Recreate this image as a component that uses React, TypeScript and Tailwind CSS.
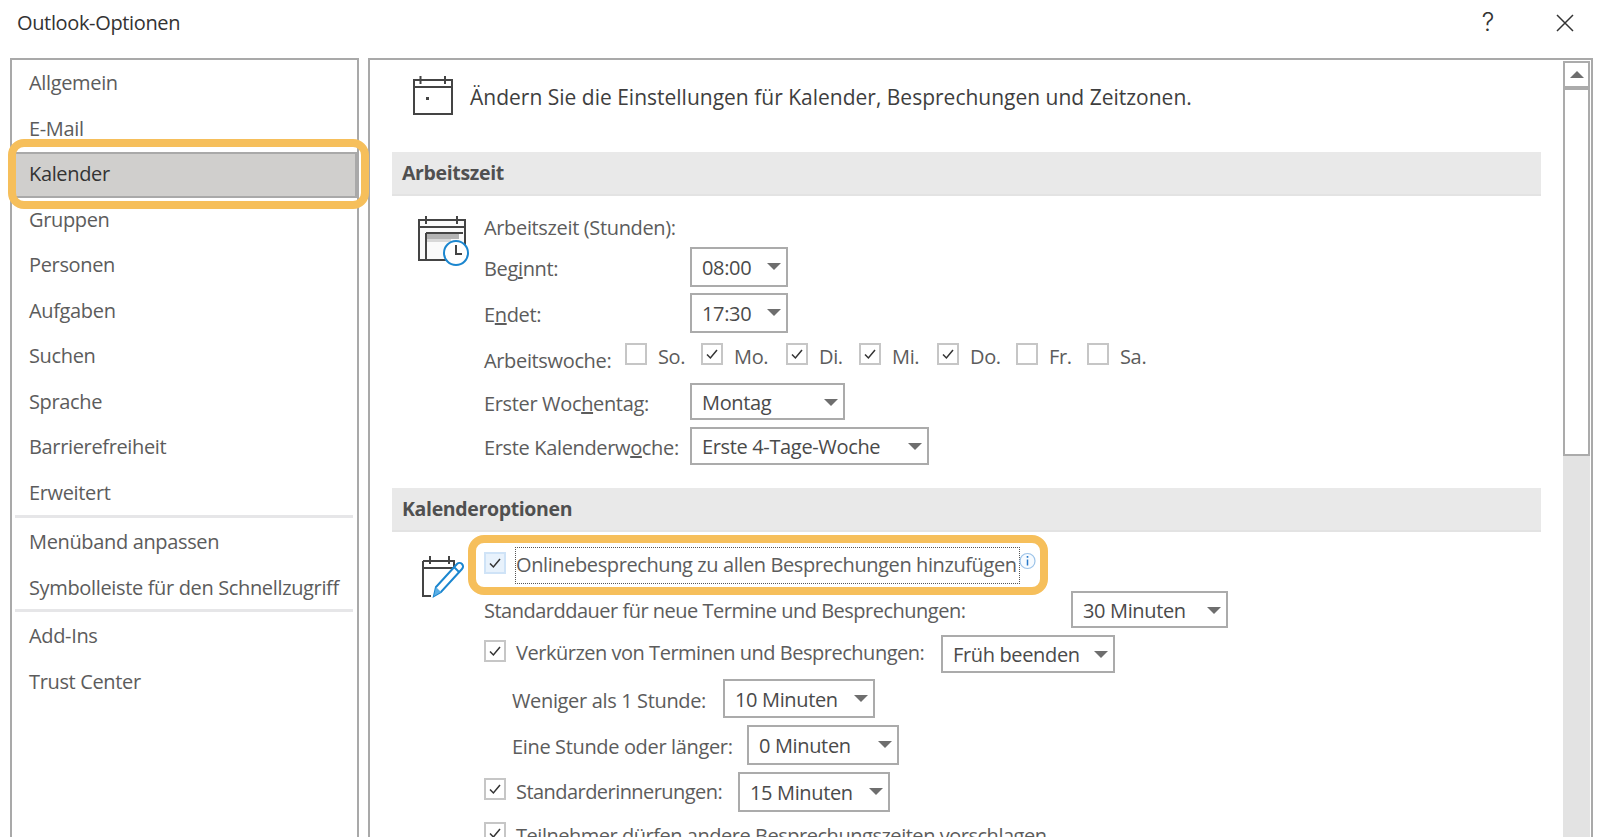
import type { ReactNode } from "react";

const navTop = ["Allgemein", "E-Mail", "Kalender", "Gruppen", "Personen", "Aufgaben", "Suchen", "Sprache", "Barrierefreiheit", "Erweitert"];
const navMid = ["Menüband anpassen", "Symbolleiste für den Schnellzugriff"];
const navEnd = ["Add-Ins", "Trust Center"];

const days = [
  { label: "So.", on: false, w: "w-[76px]" },
  { label: "Mo.", on: true, w: "w-[85px]" },
  { label: "Di.", on: true, w: "w-[73px]" },
  { label: "Mi.", on: true, w: "w-[78px]" },
  { label: "Do.", on: true, w: "w-[79px]" },
  { label: "Fr.", on: false, w: "w-[71px]" },
  { label: "Sa.", on: false, w: "w-[60px]" },
];

function NavItem({ label }: { label: string }) {
  const selected = label === "Kalender";
  return (
    <div
      className={
        selected
          ? "h-[45.5px] flex items-center pl-[14px] pb-[1px] bg-[#d0cfcd] border-y-2 border-r-2 border-[#a9a9a9] text-[#333333]"
          : "h-[45.5px] flex items-center pl-[14px] pb-[1px]"
      }
    >
      {label}
    </div>
  );
}

function Checkbox({ on, focus }: { on: boolean; focus?: boolean }) {
  return (
    <span
      className={
        focus
          ? "w-[22px] h-[22px] -mt-[6px] shrink-0 flex items-center justify-center border-2 border-[#cfe3f7] bg-[#e8f2fc]"
          : "w-[22px] h-[22px] -mt-[6px] shrink-0 flex items-center justify-center border-2 border-[#c6c6c6] bg-white"
      }
    >
      {on && (
        <svg width="14" height="12" viewBox="0 0 14 12" fill="none">
          <path d="M2 6.5 5.4 10 12 2" stroke="#333333" strokeWidth="1.5" />
        </svg>
      )}
    </span>
  );
}

function Select({ value, w, h = "h-[40px]", arrow }: { value: string; w: string; h?: string; arrow: string }) {
  return (
    <div className={`${w} ${h} shrink-0 flex items-center pl-[10px] pt-[2px] border-2 border-[#ababab] bg-white text-[#4a4a4a] relative`}>
      {value}
      <span className={`absolute ${arrow} top-[14px] w-0 h-0 border-x-[7px] border-x-transparent border-t-[7px] border-t-[#6e6e6e]`} />
    </div>
  );
}

function SectionHeader({ children }: { children: ReactNode }) {
  return (
    <div className="h-[44px] flex items-center pl-[10px] bg-[#e9e9e9] border-b-2 border-[#e3e3e3] font-bold text-[#505050] text-[19.5px]">
      {children}
    </div>
  );
}

function CalendarIcon() {
  return (
    <svg width="42" height="42" viewBox="0 0 42 42" fill="none" stroke="#444444" strokeWidth="2">
      <path d="M2 6h38v34H2zM2 13h38M8.500 2v8M33 2v8" />
      <rect x="14" y="23" width="3" height="3" fill="#444444" stroke="none" />
    </svg>
  );
}

function WorkCalendarIcon() {
  return (
    <svg width="54" height="54" viewBox="0 0 54 54" fill="none">
      <rect x="2" y="6" width="46" height="40" fill="#fafafa" />
      <rect x="10" y="19" width="32" height="6" fill="#b3b3b3" />
      <rect x="10" y="25" width="24" height="3" fill="#d8d8d8" />
      <path d="M48 36V6H2v40h30M2 13h46M9 19v27M9 19h37M9 2v8M40 2v8" stroke="#444444" strokeWidth="2" />
      <circle cx="39" cy="39" r="12" fill="#ffffff" stroke="#1b86cf" strokeWidth="2" />
      <path d="M39 31v9h6" stroke="#444444" strokeWidth="2" />
    </svg>
  );
}

function PencilCalendarIcon() {
  return (
    <svg width="46" height="44" viewBox="0 0 46 44" fill="none">
      <path d="M2 7h31v6M2 7v35h8M2 14h31M9 2v8M28 2v8" stroke="#444444" strokeWidth="2" />
      <path d="M13 42l2-9L36 10a3.500 3.500 0 0 1 5 5L20 38z" fill="#ffffff" stroke="#1b86cf" strokeWidth="2" />
      <path d="M13 42l2-9 5 5z" fill="#5cb0e6" />
      <path d="M33 13l5 5" stroke="#1b86cf" strokeWidth="2" />
    </svg>
  );
}

function InfoIcon() {
  return (
    <svg width="17" height="18" viewBox="0 0 17 18" fill="none">
      <circle cx="8.500" cy="9" r="7.500" fill="#f7fbff" stroke="#9cc3e8" strokeWidth="1.200" />
      <path d="M8.500 7.500v6" stroke="#2878c8" strokeWidth="1.500" />
      <rect x="7.700" y="4" width="1.600" height="1.800" fill="#2878c8" />
    </svg>
  );
}

export default function App() {
  return (
    <div className="h-[837px] overflow-hidden bg-white flex flex-col text-[#5c5c5c] text-[20px] font-['Open_Sans','Noto_Sans',sans-serif] tracking-[-0.35px]">
      {/* title bar */}
      <div className="h-[58px] shrink-0 flex items-center justify-between pl-[17px] pr-[25px] pb-[13px] text-[#333333]">
        <span>Outlook-Optionen</span>
        <div className="flex items-center gap-[61px]">
          <span className="text-[25px] leading-none font-['Inter',sans-serif] font-light">?</span>
          <svg width="20" height="20" viewBox="0 0 20 20" fill="none" stroke="#333333" strokeWidth="1.500">
            <path d="M2 2l16 16M18 2 2 18" />
          </svg>
        </div>
      </div>

      <div className="flex-1 min-h-0 flex pl-[10px] pr-[7px] gap-[9px]">
        {/* left nav */}
        <div className="w-[349px] shrink-0 border-x-2 border-t-2 border-[#a9a9a9] pt-[1px] pl-[3px] relative">
          <div>
            {navTop.map((n) => (
              <NavItem key={n} label={n} />
            ))}
          </div>
          <div className="h-[3px] bg-[#e6e6e8] -mt-[1px] mb-[2px] mr-[4px]" />
          <div>
            {navMid.map((n) => (
              <NavItem key={n} label={n} />
            ))}
          </div>
          <div className="h-[3px] bg-[#e6e6e8] -mt-[2px] mr-[4px]" />
          <div className="pt-[2px]">
            {navEnd.map((n) => (
              <NavItem key={n} label={n} />
            ))}
          </div>
          <div className="absolute left-[-4px] top-[79px] w-[361px] h-[70px] border-[8px] border-[#f6bf5b] rounded-[16px]" />
        </div>

        {/* right panel */}
        <div className="flex-1 min-w-0 border-x-2 border-t-2 border-[#a9a9a9] flex">
          <div className="flex-1 min-w-0 pl-[22px] pr-[22px]">
            <div className="h-[92px] flex items-start pl-[20px] pt-[14px] gap-[16px] text-[#3e3e3e] text-[21px] tracking-[0px]">
              <CalendarIcon />
              <span className="pt-[8px]">Ändern Sie die Einstellungen für Kalender, Besprechungen und Zeitzonen.</span>
            </div>

            <SectionHeader>Arbeitszeit</SectionHeader>

            <div className="flex h-[292px]">
              <div className="w-[92px] shrink-0 pl-[25px] pt-[18px]">
                <WorkCalendarIcon />
              </div>
              <div className="flex-1 min-w-0">
                <div className="h-[28px] mt-[18px] flex items-center">Arbeitszeit (Stunden):</div>
                <div className="mt-[5px] flex items-center">
                  <span className="w-[206px] pt-[4px]">Beg<u>i</u>nnt:</span>
                  <Select value="08:00" w="w-[98px]" arrow="right-[5px]" />
                </div>
                <div className="mt-[6px] flex items-center">
                  <span className="w-[206px] pt-[4px]">E<u>n</u>det:</span>
                  <Select value="17:30" w="w-[98px]" arrow="right-[5px]" />
                </div>
                <div className="mt-[7px] h-[38px] flex items-center">
                  <span className="w-[141px] shrink-0 pt-[4px]">Arbeitswoche:</span>
                  {days.map((d) => (
                    <div key={d.label} className={`${d.w} shrink-0 flex items-center gap-[11px] -mt-[4px]`}>
                      <Checkbox on={d.on} />
                      <span>{d.label}</span>
                    </div>
                  ))}
                </div>
                <div className="mt-[5px] flex items-center">
                  <span className="w-[206px] pt-[4px]">Erster Woc<u>h</u>entag:</span>
                  <Select value="Montag" w="w-[155px]" h="h-[37px]" arrow="right-[5px]" />
                </div>
                <div className="mt-[7px] flex items-center">
                  <span className="w-[206px] pt-[4px]">Erste Kalenderw<u>o</u>che:</span>
                  <Select value="Erste 4-Tage-Woche" w="w-[239px]" h="h-[38px]" arrow="right-[5px]" />
                </div>
              </div>
            </div>

            <SectionHeader>Kalenderoptionen</SectionHeader>

            <div className="flex">
              <div className="w-[92px] shrink-0 pl-[29px] pt-[22px]">
                <PencilCalendarIcon />
              </div>
              <div className="flex-1 min-w-0 relative">
                <div className="mt-[15px] h-[37px] flex items-center gap-[9px]">
                  <Checkbox on focus />
                  <span className="w-[505px] h-[37px] shrink-0 flex items-center pb-[2px] border border-dotted border-[#555555] whitespace-nowrap tracking-[-0.4px]">
                    Onlinebesprechung zu allen Besprechungen hinzufügen
                  </span>
                  <span className="-ml-[10px] -mt-[10px]">
                    <InfoIcon />
                  </span>
                </div>
                <div className="mt-[7px] flex items-center">
                  <span className="w-[587px] shrink-0 pt-[2px] tracking-[-0.5px]">Standarddauer für neue Termine und Besprechungen:</span>
                  <Select value="30 Minuten" w="w-[157px]" h="h-[37px]" arrow="right-[5px]" />
                </div>
                <div className="mt-[7px] h-[38px] flex items-center gap-[10px]">
                  <Checkbox on />
                  <span className="w-[415px] shrink-0 -mt-[2px] tracking-[-0.48px]">Verkürzen von Terminen und Besprechungen:</span>
                  <Select value="Früh beenden" w="w-[174px]" h="h-[38px]" arrow="right-[5px]" />
                </div>
                <div className="mt-[6px] flex items-center pl-[28px]">
                  <span className="w-[211px] shrink-0 pt-[4px]">Weniger als 1 Stunde:</span>
                  <Select value="10 Minuten" w="w-[152px]" h="h-[39px]" arrow="right-[5px]" />
                </div>
                <div className="mt-[7px] flex items-center pl-[28px]">
                  <span className="w-[235px] shrink-0 pt-[4px]">Eine Stunde oder länger:</span>
                  <Select value="0 Minuten" w="w-[152px]" arrow="right-[5px]" />
                </div>
                <div className="mt-[7px] flex items-center gap-[10px]">
                  <Checkbox on />
                  <span className="w-[212px] shrink-0 tracking-[-0.55px]">Standarderinnerungen:</span>
                  <Select value="15 Minuten" w="w-[152px]" arrow="right-[5px]" />
                </div>
                <div className="mt-[9px] flex items-center gap-[10px]">
                  <Checkbox on />
                  <span className="whitespace-nowrap tracking-[-0.47px]">Teilnehmer dürfen andere Besprechungszeiten vorschlagen</span>
                </div>
                <div className="absolute left-[-16px] top-[3px] w-[580px] h-[60px] border-[8px] border-[#f6bf5b] rounded-[16px]" />
              </div>
            </div>
          </div>

          {/* scrollbar */}
          <div className="w-[28px] shrink-0 mt-[1px] flex flex-col">
            <div className="h-[29px] mr-[1px] border-2 border-b-[4px] border-[#ababab] flex items-center justify-center">
              <span className="w-0 h-0 border-x-[7px] border-x-transparent border-b-[7px] border-b-[#6e6e6e]" />
            </div>
            <div className="h-[366px] mr-[1px] border-x-2 border-b-2 border-[#ababab]" />
            <div className="flex-1 mr-[1px] bg-[#e3e3e3]" />
          </div>
        </div>
      </div>
    </div>
  );
}
